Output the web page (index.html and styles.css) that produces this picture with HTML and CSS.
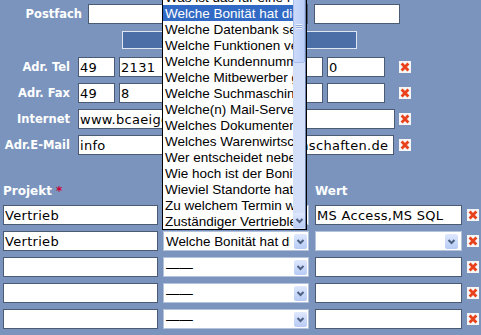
FILE: index.html
```html
<!DOCTYPE html>
<html lang="de">
<head>
    <meta charset="UTF-8">
    <meta name="viewport" content="width=device-width, initial-scale=1.0">
    <title>Adresse und Projekt</title>
    <link rel="stylesheet" href="styles.css">
</head>
<body>
<div class="page">

    <!-- Adresse -->
    <div class="addr">
        <div class="row row-postfach">
            <label class="lbl lbl-wide">Postfach</label>
            <input type="text" class="field w-postfach">
            <input type="text" class="field w-plz">
        </div>
        <div class="row row-bar">
            <div class="bar"></div>
        </div>
        <div class="row">
            <label class="lbl">Adr. Tel</label>
            <div class="cells">
                <input type="text" class="field w-cc" value="49">
                <input type="text" class="field w-area" value="2131">
                <input type="text" class="field w-num" value="">
                <input type="text" class="field w-ext" value="0">
            </div>
            <svg class="del" width="12" height="12" viewBox="0 0 12 12"><rect width="12" height="12" fill="#f6f6f6"/><path d="M2.6 2.6 L9.4 9.4 M9.4 2.6 L2.6 9.4" stroke="#e9411c" stroke-width="2.8"/></svg>
        </div>
        <div class="row">
            <label class="lbl">Adr. Fax</label>
            <div class="cells">
                <input type="text" class="field w-cc" value="49">
                <input type="text" class="field w-area" value="8">
                <input type="text" class="field w-num" value="">
                <input type="text" class="field w-ext" value="">
            </div>
            <svg class="del" width="12" height="12" viewBox="0 0 12 12"><rect width="12" height="12" fill="#f6f6f6"/><path d="M2.6 2.6 L9.4 9.4 M9.4 2.6 L2.6 9.4" stroke="#e9411c" stroke-width="2.8"/></svg>
        </div>
        <div class="row">
            <label class="lbl">Internet</label>
            <div class="cells">
                <input type="text" class="field w-web" value="www.bcaeigenschaften.de">
            </div>
            <svg class="del" width="12" height="12" viewBox="0 0 12 12"><rect width="12" height="12" fill="#f6f6f6"/><path d="M2.6 2.6 L9.4 9.4 M9.4 2.6 L2.6 9.4" stroke="#e9411c" stroke-width="2.8"/></svg>
        </div>
        <div class="row">
            <label class="lbl">Adr.E-Mail</label>
            <div class="cells">
                <input type="text" class="field w-mail-user" value="info">
                <input type="text" class="field w-mail-domain" value="bcaeigenschaften.de">
            </div>
            <svg class="del" width="12" height="12" viewBox="0 0 12 12"><rect width="12" height="12" fill="#f6f6f6"/><path d="M2.6 2.6 L9.4 9.4 M9.4 2.6 L2.6 9.4" stroke="#e9411c" stroke-width="2.8"/></svg>
        </div>
    </div>

    <!-- Projekt -->
    <div class="proj-head">
        <span class="h-projekt">Projekt <span class="req">*</span></span>
        <span class="h-wert">Wert</span>
    </div>

    <div class="proj-rows">
        <div class="prow">
            <input type="text" class="field w-proj" value="Vertrieb">
            <div class="combo">
                <span class="combo-text">Zuständiger Vertriebler</span>
                <span class="combo-btn"><svg width="13" height="15" viewBox="0 0 13 15"><path d="M3.5 6 L6.5 9 L9.5 6" fill="none" stroke="#4d6185" stroke-width="2"/></svg></span>
            </div>
            <input type="text" class="field w-wert" value="MS Access,MS SQL">
            <svg class="del" width="12" height="12" viewBox="0 0 12 12"><rect width="12" height="12" fill="#f6f6f6"/><path d="M2.6 2.6 L9.4 9.4 M9.4 2.6 L2.6 9.4" stroke="#e9411c" stroke-width="2.8"/></svg>
        </div>
        <div class="prow">
            <input type="text" class="field w-proj" value="Vertrieb">
            <div class="combo">
                <span class="combo-text">Welche Bonität hat die Firma?</span>
                <span class="combo-btn"><svg width="13" height="15" viewBox="0 0 13 15"><path d="M3.5 6 L6.5 9 L9.5 6" fill="none" stroke="#4d6185" stroke-width="2"/></svg></span>
            </div>
            <div class="combo combo-wert">
                <span class="combo-text"></span>
                <span class="combo-btn"><svg width="13" height="15" viewBox="0 0 13 15"><path d="M3.5 6 L6.5 9 L9.5 6" fill="none" stroke="#4d6185" stroke-width="2"/></svg></span>
            </div>
            <svg class="del" width="12" height="12" viewBox="0 0 12 12"><rect width="12" height="12" fill="#f6f6f6"/><path d="M2.6 2.6 L9.4 9.4 M9.4 2.6 L2.6 9.4" stroke="#e9411c" stroke-width="2.8"/></svg>
        </div>
        <div class="prow">
            <input type="text" class="field w-proj" value="">
            <div class="combo">
                <span class="combo-text">——</span>
                <span class="combo-btn"><svg width="13" height="15" viewBox="0 0 13 15"><path d="M3.5 6 L6.5 9 L9.5 6" fill="none" stroke="#4d6185" stroke-width="2"/></svg></span>
            </div>
            <input type="text" class="field w-wert" value="">
            <svg class="del" width="12" height="12" viewBox="0 0 12 12"><rect width="12" height="12" fill="#f6f6f6"/><path d="M2.6 2.6 L9.4 9.4 M9.4 2.6 L2.6 9.4" stroke="#e9411c" stroke-width="2.8"/></svg>
        </div>
        <div class="prow">
            <input type="text" class="field w-proj" value="">
            <div class="combo">
                <span class="combo-text">——</span>
                <span class="combo-btn"><svg width="13" height="15" viewBox="0 0 13 15"><path d="M3.5 6 L6.5 9 L9.5 6" fill="none" stroke="#4d6185" stroke-width="2"/></svg></span>
            </div>
            <input type="text" class="field w-wert" value="">
            <svg class="del" width="12" height="12" viewBox="0 0 12 12"><rect width="12" height="12" fill="#f6f6f6"/><path d="M2.6 2.6 L9.4 9.4 M9.4 2.6 L2.6 9.4" stroke="#e9411c" stroke-width="2.8"/></svg>
        </div>
        <div class="prow">
            <input type="text" class="field w-proj" value="">
            <div class="combo">
                <span class="combo-text">——</span>
                <span class="combo-btn"><svg width="13" height="15" viewBox="0 0 13 15"><path d="M3.5 6 L6.5 9 L9.5 6" fill="none" stroke="#4d6185" stroke-width="2"/></svg></span>
            </div>
            <input type="text" class="field w-wert" value="">
            <svg class="del" width="12" height="12" viewBox="0 0 12 12"><rect width="12" height="12" fill="#f6f6f6"/><path d="M2.6 2.6 L9.4 9.4 M9.4 2.6 L2.6 9.4" stroke="#e9411c" stroke-width="2.8"/></svg>
        </div>
    </div>

    <!-- open dropdown of the first Projekt row -->
    <div class="dropdown">
        <ul class="dd-list">
            <li>Was ist das für eine Firma?</li>
            <li class="sel">Welche Bonität hat die Firma?</li>
            <li>Welche Datenbank setzen Sie ein?</li>
            <li>Welche Funktionen verwenden Sie?</li>
            <li>Welche Kundennummer hat die Firma?</li>
            <li>Welche Mitbewerber gibt es?</li>
            <li>Welche Suchmaschine nutzen Sie?</li>
            <li>Welche(n) Mail-Server nutzen Sie?</li>
            <li>Welches Dokumentenmanagement?</li>
            <li>Welches Warenwirtschaftssystem?</li>
            <li>Wer entscheidet neben Ihnen?</li>
            <li>Wie hoch ist der Bonitätsindex?</li>
            <li>Wieviel Standorte hat die Firma?</li>
            <li>Zu welchem Termin wird entschieden?</li>
            <li>Zuständiger Vertriebler</li>
        </ul>
        <div class="dd-scroll">
            <div class="dd-thumb"><span class="grip"></span></div>
            <div class="dd-track"></div>
            <span class="combo-btn dd-down"><svg width="13" height="15" viewBox="0 0 13 15"><path d="M3.5 6 L6.5 9 L9.5 6" fill="none" stroke="#4d6185" stroke-width="2"/></svg></span>
        </div>
    </div>

</div>
</body>
</html>
```

FILE: styles.css
```css
body {
    margin: 0;
    background: #7a94bd;
    overflow: hidden;
}

.page {
    position: relative;
    height: 335px;
    padding-top: 4px;
    box-sizing: border-box;
}

/* upper address block */
.row {
    display: flex;
    align-items: center;
    height: 20px;
    margin-bottom: 6px;
}

.row-postfach {
    margin-bottom: 7px;
}

.row-bar {
    height: 18px;
    margin-bottom: 8px;
}

.bar {
    margin-left: 122px;
    width: 235px;
    height: 18px;
    box-sizing: border-box;
    background: #4b6fa6;
    border: 1px solid #dfe6f1;
}

.lbl {
    width: 70px;
    margin-right: 8px;
    text-align: right;
    color: #fff;
    font-family: "DejaVu Sans", Verdana, sans-serif;
    font-weight: bold;
    font-size: 11.5px;
    white-space: nowrap;
}

.lbl-wide {
    width: 82px;
    margin-right: 6px;
}

.cells {
    display: flex;
    gap: 4px;
    width: 321px;
}

.field {
    height: 20px;
    box-sizing: border-box;
    margin: 0;
    padding: 0 1px;
    border: 1px solid #4b5b73;
    background: #fff;
    color: #000;
    font-family: "DejaVu Sans", Verdana, sans-serif;
    font-size: 13px;
    letter-spacing: 0.3px;
    outline: none;
}

.w-postfach { width: 220px; margin-right: 6px; }
.w-plz { width: 86px; }
.w-cc { width: 37px; }
.w-area { width: 100px; }
.w-num { width: 100px; }
.w-ext { width: 58px; }
.w-web { width: 317px; }
.w-mail-user { width: 163px; }
.w-mail-domain { width: 149px; }

.del {
    display: block;
    flex: none;
}

/* Projekt block */
.proj-head {
    display: flex;
    margin-top: 29px;
    padding-left: 3px;
    height: 14px;
    line-height: 14px;
    color: #fff;
    font-family: "DejaVu Sans", Verdana, sans-serif;
    font-weight: bold;
    font-size: 12px;
}

.h-projekt {
    width: 312px;
}

.req {
    color: #cc0033;
}

.proj-rows {
    margin-top: 7px;
    padding-left: 3px;
}

.prow {
    display: flex;
    align-items: center;
    height: 20px;
    margin-bottom: 6px;
}

.w-proj { width: 155px; margin-right: 5px; }
.w-wert { width: 147px; margin-right: 5px; }

.combo {
    display: flex;
    align-items: center;
    width: 146px;
    height: 20px;
    box-sizing: border-box;
    margin-right: 6px;
    border: 1px solid #b4c3da;
    background: #fff;
    font-family: "Liberation Sans", Arial, sans-serif;
    font-size: 13.4px;
}

.combo-wert {
    width: 147px;
    margin-right: 5px;
}

.combo-text {
    flex: 1;
    overflow: hidden;
    white-space: nowrap;
    padding-left: 2px;
    margin-right: 4px;
}

.combo-btn {
    display: block;
    flex: none;
    width: 13px;
    height: 15px;
    margin-right: 1px;
    box-sizing: border-box;
    border-radius: 2px;
    background: linear-gradient(#dfe8fd, #b8cbf5);
}

.combo-btn svg {
    display: block;
}

.combo-wert .combo-btn {
    margin-right: 3px;
}

/* opened list */
.dropdown {
    position: absolute;
    left: 162px;
    top: -12px;
    width: 145px;
    height: 242px;
    box-sizing: border-box;
    display: flex;
    border: 1px solid #000;
    background: #fff;
}

.dd-list {
    list-style: none;
    margin: 0;
    padding: 0;
    width: 130px;
    overflow: hidden;
    font-family: "Liberation Sans", Arial, sans-serif;
    font-size: 13.5px;
    color: #000;
}

.dd-list li {
    height: 16px;
    line-height: 17px;
    padding-left: 2px;
    white-space: nowrap;
}

.dd-list li.sel {
    background: #316ac5;
    color: #fff;
}

.dd-scroll {
    display: flex;
    flex-direction: column;
    width: 13px;
    box-sizing: border-box;
    border-right: 1px solid #6d82aa;
    background: #d3dff9;
}

.dd-thumb {
    display: flex;
    align-items: center;
    justify-content: center;
    height: 74px;
    box-sizing: border-box;
    border: 1px solid #a9bdea;
    border-radius: 2px;
    background: linear-gradient(90deg, #cbd9fb, #bccff8);
}

.grip {
    width: 6px;
    height: 5px;
    background: repeating-linear-gradient(#eef3fe 0 1px, #8ea6d8 1px 2px);
}

.dd-track {
    flex: 1;
}

.dd-down {
    width: 12px;
    margin: 0 0 1px 0;
}
```
